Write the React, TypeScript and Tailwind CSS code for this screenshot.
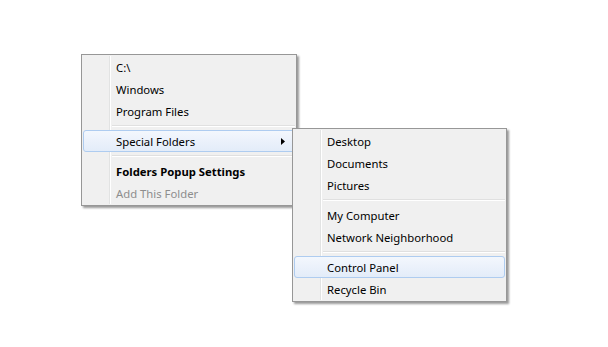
type Item = { label: string; bold?: boolean; disabled?: boolean; active?: boolean; submenu?: boolean } | 'sep';

const mainItems: Item[] = [
  { label: 'C:\\' },
  { label: 'Windows' },
  { label: 'Program Files' },
  'sep',
  { label: 'Special Folders', active: true, submenu: true },
  'sep',
  { label: 'Folders Popup Settings', bold: true },
  { label: 'Add This Folder', disabled: true },
];

const subItems: Item[] = [
  { label: 'Desktop' },
  { label: 'Documents' },
  { label: 'Pictures' },
  'sep',
  { label: 'My Computer' },
  { label: 'Network Neighborhood' },
  'sep',
  { label: 'Control Panel', active: true },
  { label: 'Recycle Bin' },
];

function Menu({ items, className }: { items: Item[]; className: string }) {
  return (
    <div
      className={`absolute border border-[#979797] bg-[#f0f0f0] p-[1px] shadow-[2px_2px_2px_rgba(0,0,0,0.4)] ${className}`}
    >
      {/* Gutter lines */}
      <div className="absolute top-[1px] bottom-[1px] left-[27px] w-px bg-[#e2e3e3]" />
      <div className="absolute top-[1px] bottom-[1px] left-[28px] w-px bg-white" />
      <div className="relative flex flex-col">
        {items.map((item, i) =>
          item === 'sep' ? (
            <div key={i} className="flex h-[8px] flex-col justify-center pl-[29px]">
              <div className="h-px bg-[#e0e0e0]" />
              <div className="h-px bg-white" />
            </div>
          ) : (
            <div
              key={i}
              className={`relative flex h-[22px] items-center rounded-[3px] border pl-[32px] pr-2 pt-[2px] text-[11.3px] ${
                item.active
                  ? 'border-[#aeccf0] bg-gradient-to-b from-[#f3f7fd] to-[#e3ecf9]'
                  : 'border-transparent'
              } ${item.bold ? 'font-bold' : ''} ${item.disabled ? 'text-[#8d8d8d]' : 'text-black'}`}
            >
              <span className="leading-none">{item.label}</span>
              {item.submenu && (
                <svg className="absolute right-[9px] top-[7px]" width="4" height="7" viewBox="0 0 4 7">
                  <path d="M0 0 L4 3.5 L0 7 Z" fill="#000" />
                </svg>
              )}
            </div>
          ),
        )}
      </div>
    </div>
  );
}

export default function App() {
  return (
    <div
      className="relative h-[347px] w-[608px] overflow-hidden bg-white"
      style={{ fontFamily: '"Noto Sans", "Open Sans", sans-serif' }}
    >
      <Menu items={mainItems} className="left-[81px] top-[54px] w-[216px]" />
      <Menu items={subItems} className="left-[292px] top-[128px] w-[215px]" />
    </div>
  );
}
